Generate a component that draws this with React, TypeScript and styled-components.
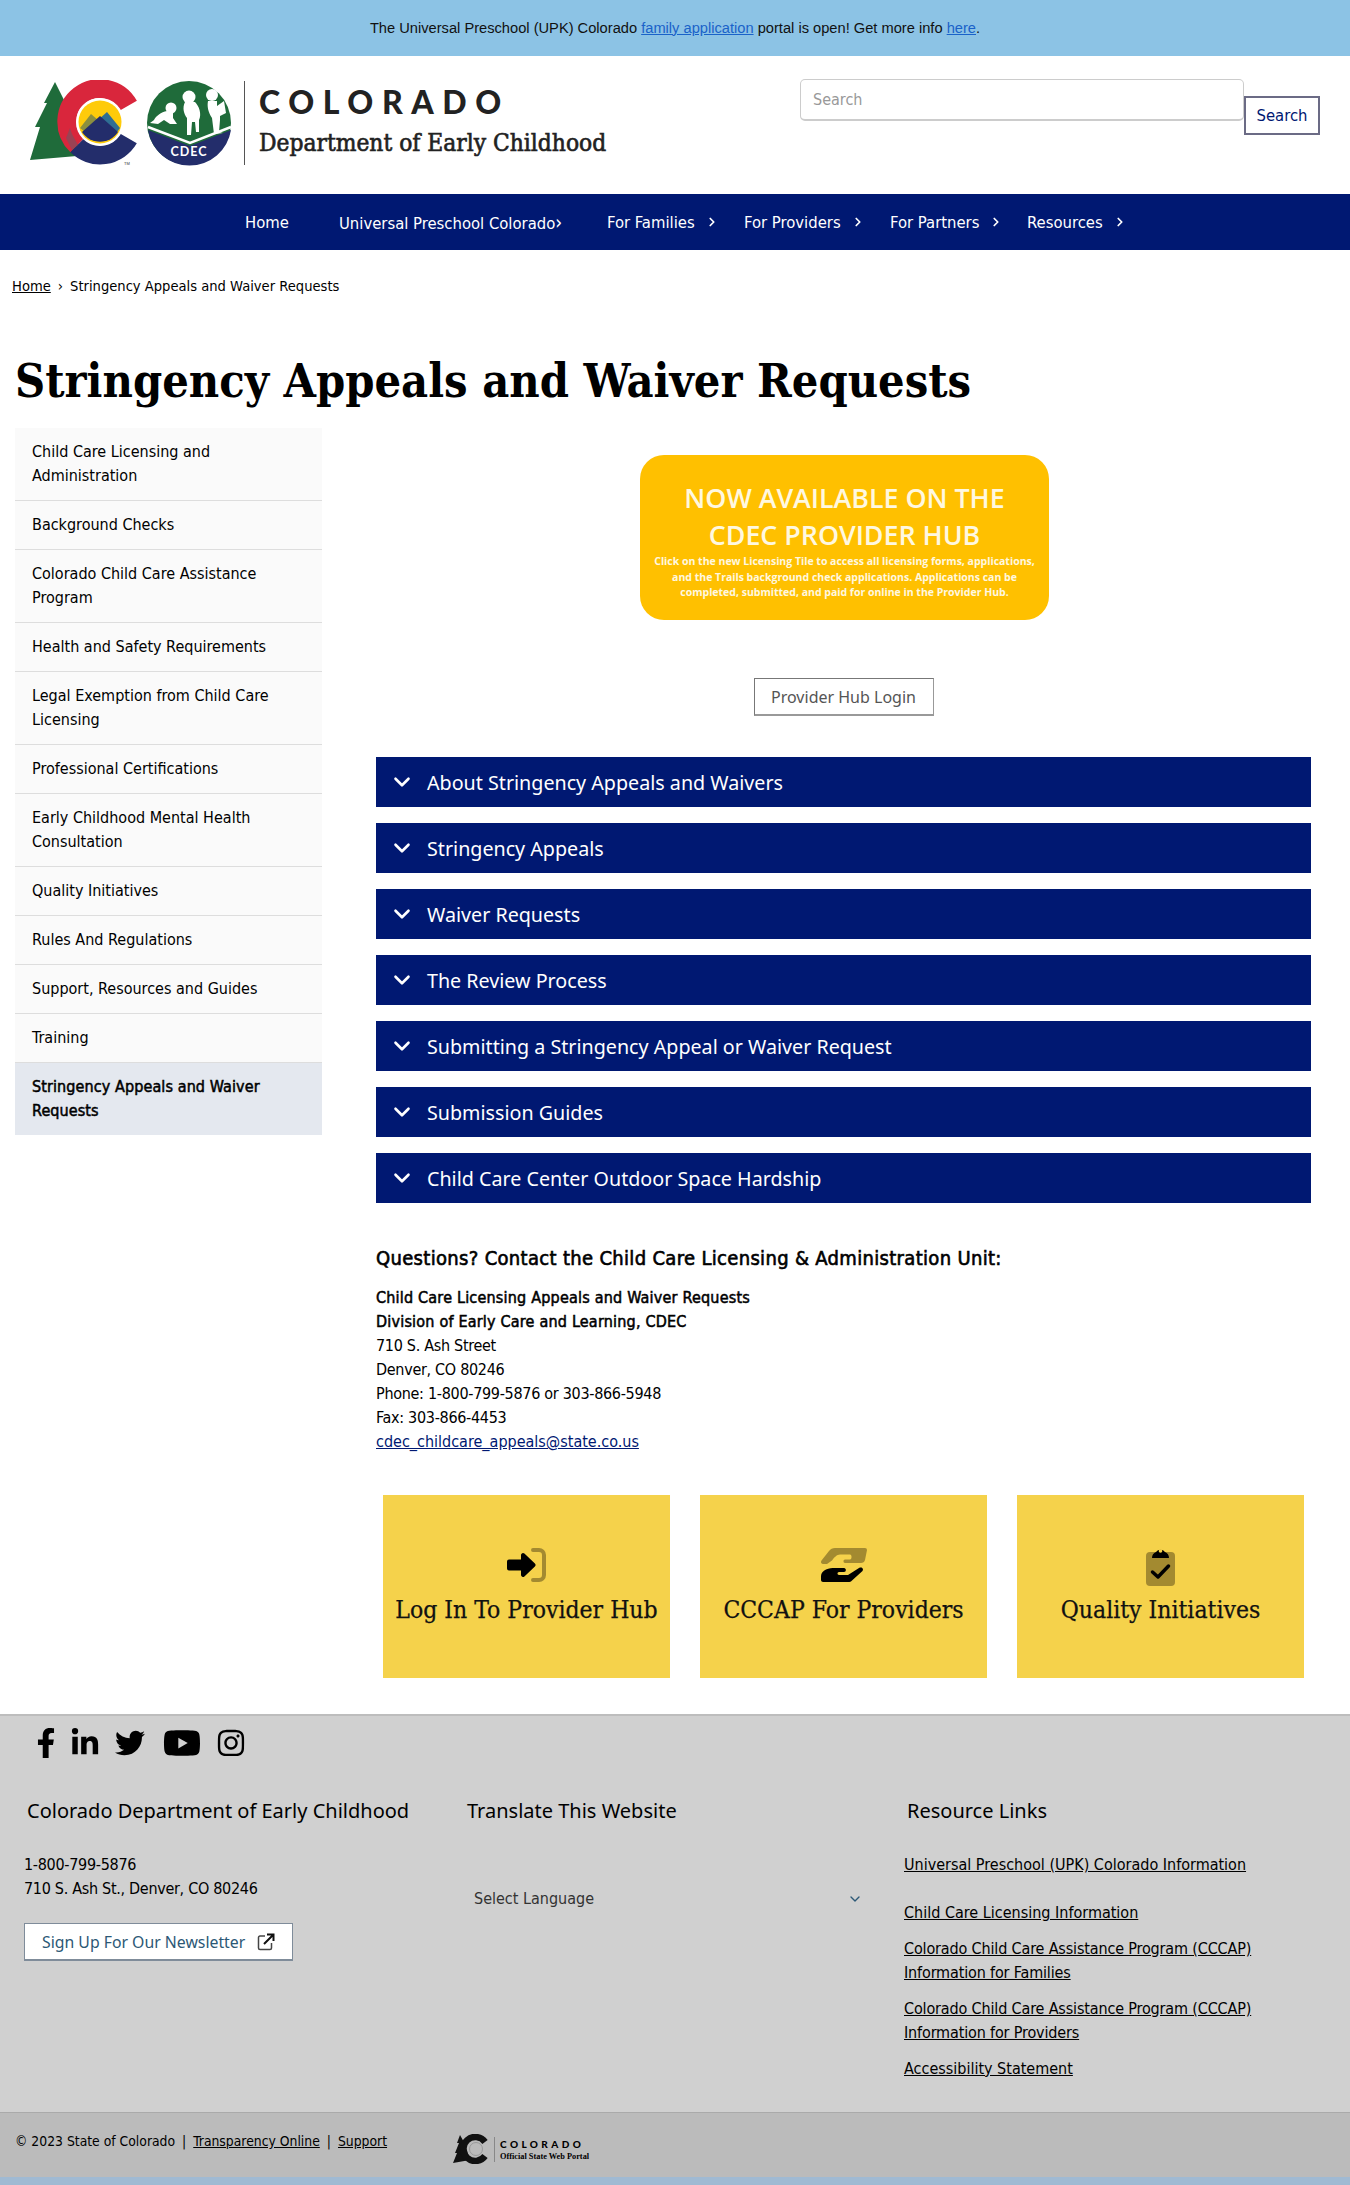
import React from 'react';
import styled, { createGlobalStyle } from 'styled-components';
import { ChevronDown, ChevronRight } from 'lucide-react';
import { FaFacebookF, FaLinkedinIn, FaTwitter, FaYoutube, FaInstagram } from 'react-icons/fa';

const BODY_FONT = `"DejaVu Sans Condensed", "DejaVu Sans", sans-serif`;
const HEAD_FONT = `"Noto Sans", "Open Sans", sans-serif`;
const SLAB_FONT = `"DejaVu Serif Condensed", "DejaVu Serif", serif`;
const NAVY = '#001872';

const GlobalStyle = createGlobalStyle`
  html, body {
    margin: 0;
    padding: 0;
    background: #fff;
    color: #000;
    font-family: ${BODY_FONT};
    font-size: 16px;
  }
  * { box-sizing: border-box; }
`;

const Page = styled.div`
  width: 1350px;
  height: 2185px;
  overflow: hidden;
`;

const AlertBar = styled.div`
  height: 56px;
  background: #8cc3e5;
  display: flex;
  align-items: center;
  justify-content: center;
  font-family: "Liberation Sans", Arial, sans-serif;
  font-size: 14.67px;
  color: #111;
  padding-bottom: 1px;
  a { color: #1a62c9; }
`;

const Header = styled.header`
  height: 138px;
  display: flex;
  justify-content: space-between;
  padding: 23px 30px 0 28px;
`;

const LogoBlock = styled.div`
  display: flex;
  align-items: flex-start;
`;

const LogoMark = styled.svg`
  margin-top: 1px;
`;

const Divider = styled.div`
  width: 1px;
  height: 84px;
  margin: 2px 14px 0 10px;
  background: #555;
`;

const Wordmark = styled.div`
  display: flex;
  flex-direction: column;
  color: #222;
`;

const WordTop = styled.span`
  font-family: "Lato", sans-serif;
  font-weight: 900;
  font-size: 32px;
  letter-spacing: 8.6px;
  line-height: 38px;
  margin-top: 4px;
`;

const WordBottom = styled.span`
  font-family: ${SLAB_FONT};
  font-size: 24.3px;
  line-height: 30px;
  margin-top: 7px;
  -webkit-text-stroke: 0.6px #222;
`;

const SearchBar = styled.div`
  display: flex;
  align-items: flex-start;
`;

const SearchInput = styled.input`
  width: 444px;
  height: 42px;
  border: 1px solid #ccc;
  border-bottom-width: 2px;
  border-radius: 5px;
  padding: 0 12px;
  font-family: ${BODY_FONT};
  font-size: 16px;
  &::placeholder { color: #999; }
`;

const SearchButton = styled.button`
  width: 76px;
  height: 39px;
  margin-top: 17px;
  background: #fff;
  border: 2px solid #6b6b85;
  color: ${NAVY};
  font-family: ${BODY_FONT};
  font-size: 16.5px;
  padding: 0;
`;

const NavBar = styled.nav`
  height: 56px;
  background: ${NAVY};
  display: flex;
  align-items: center;
  padding-left: 245px;
  color: #fff;
  font-size: 16.5px;
  b { font-size: 19px; font-weight: 400; }
`;

const NavItem = styled.a<{ $w: number }>`
  width: ${p => p.$w}px;
  display: flex;
  align-items: center;
  gap: 10px;
  white-space: nowrap;
`;

const Breadcrumb = styled.div`
  padding: 26px 0 0 12px;
  font-size: 14.6px;
  line-height: 20px;
  a { color: #000; text-decoration: underline; }
  span { margin: 0 7px; }
`;

const Title = styled.h1`
  margin: 54px 0 0 15px;
  font-family: ${SLAB_FONT};
  font-size: 46.5px;
  line-height: 62px;
  font-weight: 700;
`;

const Columns = styled.div`
  display: grid;
  grid-template-columns: 307px 935px;
  column-gap: 54px;
  padding: 16px 0 0 15px;
`;

const SideList = styled.ul`
  list-style: none;
  margin: 0;
  padding: 0;
  align-self: start;
`;

const SideItem = styled.li<{ $active?: boolean }>`
  padding: 12px 30px 12px 17px;
  line-height: 24px;
  background: ${p => (p.$active ? '#e4e8ef' : '#fafafa')};
  border-bottom: ${p => (p.$active ? '0' : '1px solid #ddd')};
  letter-spacing: ${p => (p.$active ? '0.1px' : 'normal')};
  -webkit-text-stroke: ${p => (p.$active ? '0.5px #000' : '0')};
`;

const Content = styled.main`
  display: flex;
  flex-direction: column;
`;

const Promo = styled.div`
  align-self: center;
  width: 409px;
  height: 165px;
  margin: 27px 0 0 2px;
  border-radius: 24px;
  background: #ffc000;
  color: #fff8e0;
  text-align: center;
  font-family: "Open Sans", sans-serif;
  font-weight: 700;
  padding-top: 24px;
`;

const PromoTitle = styled.div`
  font-size: 26.8px;
  font-weight: 600;
  line-height: 37px;
`;

const PromoText = styled.div`
  font-size: 10.5px;
  line-height: 15.5px;
  margin-top: 1px;
`;

const HubButton = styled.a`
  align-self: center;
  width: 180px;
  height: 38px;
  margin-top: 58px;
  border: 1px solid #777;
  border-bottom-width: 2px;
  border-color: #777 #999 #999 #777;
  color: #555;
  font-family: ${HEAD_FONT};
  font-size: 16px;
  display: flex;
  align-items: center;
  justify-content: center;
`;

const Accordions = styled.div`
  margin-top: 41px;
  display: flex;
  flex-direction: column;
  gap: 16px;
`;

const AccordionRow = styled.div`
  height: 50px;
  background: ${NAVY};
  color: #fff;
  display: flex;
  align-items: center;
  gap: 12px;
  padding-left: 13px;
  font-family: ${HEAD_FONT};
  font-size: 19.7px;
`;

const ContactBlock = styled.div`
  margin-top: 41px;
  line-height: 24px;
`;

const ContactHeading = styled.h3`
  margin: 0 0 14px;
  font-size: 20px;
  font-weight: 400;
  line-height: 28px;
  letter-spacing: 0.32px;
  -webkit-text-stroke: 0.6px #000;
`;

const ContactLine = styled.div<{ $bold?: boolean; $tight?: boolean }>`
  -webkit-text-stroke: ${p => (p.$bold ? '0.5px #000' : '0')};
  letter-spacing: ${p => (p.$tight ? '-0.3px' : p.$bold ? '0.2px' : 'normal')};
  a { color: ${NAVY}; text-decoration: underline; }
`;

const Tiles = styled.div`
  margin-top: 41px;
  padding-left: 7px;
  display: grid;
  grid-template-columns: repeat(3, 287px);
  column-gap: 30px;
`;

const Tile = styled.a`
  height: 183px;
  background: #f5d24b;
  display: flex;
  flex-direction: column;
  align-items: center;
  padding-top: 49px;
  font-family: ${SLAB_FONT};
  font-size: 24.5px;
  color: #111;
  -webkit-text-stroke: 0.25px #111;
`;

const TileIcon = styled.div`
  height: 42px;
  display: flex;
  align-items: center;
  justify-content: center;
  margin-bottom: 9px;
`;

const Footer = styled.footer`
  margin-top: 36px;
  height: 398px;
  background: #d0d0d0;
  border-top: 2px solid #bdbdbd;
`;

const SocialRow = styled.div`
  height: 50px;
  display: flex;
  align-items: center;
  gap: 15px;
  padding: 4px 0 0 31px;
  font-size: 30px;
  color: #000;
`;

const FacebookIcon = styled(FaFacebookF)`
  margin-right: -6px;
`;

const YoutubeIcon = styled(FaYoutube)`
  font-size: 38px;
  margin-left: 3px;
`;

const FooterColumns = styled.div`
  display: grid;
  grid-template-columns: 440px 440px 1fr;
  padding: 31px 0 0 24px;
  height: 346px;
`;

const FooterColumn = styled.div`
  display: flex;
  flex-direction: column;
`;

const FooterHeading = styled.h4`
  margin: 0 0 28px 3px;
  font-family: ${HEAD_FONT};
  font-weight: 400;
  font-size: 20px;
  line-height: 28px;
`;

const FooterText = styled.div`
  line-height: 24px;
  letter-spacing: -0.3px;
`;

const NewsletterButton = styled.a`
  margin-top: 22px;
  width: 269px;
  height: 38px;
  background: #fff;
  border: 1px solid #7f8c9a;
  border-bottom-width: 2px;
  color: #2c5876;
  font-family: ${HEAD_FONT};
  font-size: 15.8px;
  display: flex;
  align-items: center;
  justify-content: space-between;
  padding: 0 17px;
`;

const LanguageSelect = styled.div`
  margin: 34px 0 0 10px;
  width: 389px;
  display: flex;
  align-items: center;
  justify-content: space-between;
  color: #333;
  line-height: 24px;
`;

const ResourceLink = styled.a<{ $gap: number; $tight?: boolean }>`
  display: block;
  width: 400px;
  margin-bottom: ${p => p.$gap}px;
  line-height: 24px;
  color: #000;
  text-decoration: underline;
  letter-spacing: ${p => (p.$tight ? '-0.15px' : 'normal')};
`;

const BottomBar = styled.div`
  height: 65px;
  background: #bbb;
  border-top: 1px solid #aaa;
  display: flex;
  align-items: flex-start;
  padding: 18px 0 0 15px;
  font-size: 13.8px;
  line-height: 20px;
  a { color: #000; text-decoration: underline; }
  i { font-style: normal; margin: 0 7px; }
`;

const StateLogo = styled.div`
  margin-left: 66px;
  display: flex;
  align-items: center;
  margin-top: 3px;
`;

const StateWords = styled.div`
  border-left: 1px solid #888;
  margin-left: 5px;
  padding-left: 5px;
  display: flex;
  flex-direction: column;
`;

const StateTop = styled.span`
  font-family: "Lato", sans-serif;
  font-weight: 900;
  font-size: 10px;
  letter-spacing: 3.4px;
  line-height: 14px;
`;

const StateBottom = styled.span`
  font-family: "Liberation Serif", serif;
  font-weight: 700;
  font-size: 8.3px;
  line-height: 11px;
`;

const BlueEdge = styled.div`
  height: 8px;
  background: #a0bad3;
`;

const sideItems = [
  'Child Care Licensing and Administration',
  'Background Checks',
  'Colorado Child Care Assistance Program',
  'Health and Safety Requirements',
  'Legal Exemption from Child Care Licensing',
  'Professional Certifications',
  'Early Childhood Mental Health Consultation',
  'Quality Initiatives',
  'Rules And Regulations',
  'Support, Resources and Guides',
  'Training',
];

const accordions = [
  'About Stringency Appeals and Waivers',
  'Stringency Appeals',
  'Waiver Requests',
  'The Review Process',
  'Submitting a Stringency Appeal or Waiver Request',
  'Submission Guides',
  'Child Care Center Outdoor Space Hardship',
];

// logo: tree + C + mountains, then the CDEC round badge
const HeaderLogo = () => (
  <LogoMark width="206" height="88" viewBox="8 10 206 88">
    <path d="M35 12 L46 34 L44 34 L56 60 L60 84 L57 86 L10 90 L20 57 L15 57 L27 33 L24 33 Z" fill="#1f6b3a" />
    <path d="M108.6 35.5 A33 33 0 1 0 57 75.5" fill="none" stroke="#d9263c" strokeWidth="19" />
    <path d="M57 75.5 A33 33 0 0 0 108.6 68.5" fill="none" stroke="#232d6b" strokeWidth="19" />
    <path d="M46 68 L50 58 L52 64 L58 75 L52 80 Z" fill="#8a4a5a" opacity="0.8" />
    <circle cx="80" cy="52" r="24" fill="#fff" />
    <circle cx="80" cy="52" r="21.5" fill="#fecb0a" />
    <path d="M60 58 L71 44 L78 50 L70 66 Z" fill="#8b8f3f" />
    <path d="M78 50 L87 42 L100 58 L94 66 Z" fill="#2f6e93" />
    <path d="M62 62 L80 46 L98 62 A21.5 21.5 0 0 1 62 62 Z" fill="#232d6b" />
    <text x="104" y="95" fontSize="4" fontFamily="Liberation Sans, sans-serif" fill="#333">TM</text>
    <circle cx="169" cy="53" r="42" fill="#1f6b3a" />
    <path d="M128 60 L170 76 L211 60 A42 42 0 0 1 128 60 Z" fill="#232d6b" />
    <path d="M128 57 L170 73 L211 57" fill="none" stroke="#fff" strokeWidth="2.5" />
    <circle cx="151" cy="38" r="5.5" fill="#fff" />
    <path d="M147 41 C141 42 136 46 134 50 L130 53 L138 54 L144 50 L150 54 L157 54 L153 48 L153 43 Z" fill="#fff" />
    <circle cx="169" cy="27" r="6.5" fill="#fff" />
    <path d="M165 32 C162 38 164 44 167 48 L167 65 L171 65 L172 52 L175 52 L176 62 L179 62 L179 50 C182 44 179 36 175 32 Z" fill="#fff" />
    <circle cx="192" cy="25" r="6" fill="#fff" />
    <path d="M188 31 L197 31 L197 36 L204 31 L206 43 L200 46 L200 50 L199 62 L203 63 L194 64 L192 48 C188 42 187 36 188 31 Z" fill="#fff" />
    <text x="169" y="86" textAnchor="middle" fontSize="12.5" fontWeight="700" fontFamily="Lato, sans-serif" letterSpacing="1" fill="#fff">CDEC</text>
  </LogoMark>
);

const SignInIcon = () => (
  <svg width="40" height="34" viewBox="0 0 40 34">
    <path d="M26 2 h6 a5 5 0 0 1 5 5 v20 a5 5 0 0 1 -5 5 h-6" fill="none" stroke="#a38a30" strokeWidth="4" strokeLinecap="round" />
    <path d="M2 11.5 h12 V7 a2 2 0 0 1 3.4 -1.4 l10.5 10 a2 2 0 0 1 0 2.8 l-10.5 10 A2 2 0 0 1 14 27 v-4.5 H2 a2 2 0 0 1 -2 -2 v-7 a2 2 0 0 1 2 -2 Z" fill="#000" />
  </svg>
);

const HandsIcon = () => (
  <svg width="46" height="34" viewBox="0 0 46 34">
    <path d="M14 0 H44 a2 2 0 0 1 2 2 l-2 10 c-.5 2 -2 3 -4 3 H24 c-2 0 -2 -3.5 0 -3.5 h5 c2 0 2 -5 0 -5 H19 c-3 0 -6 3 -8 6 l-5 3.5 H2 c-2 0 -2.5 -2 -1.5 -3.5 L8 3 c1.5 -2 3.5 -3 6 -3 Z" fill="#a38a30" />
    <path d="M0 28 c0 -3 2 -5 5 -6.5 c3 -1.5 6 -1.5 9 -1.5 h9 c2.5 0 2.5 4 0 4 h-5 c-2 0 -2 3 0 3 h9 l11 -7 c3 -1.5 5 1 3.5 3 L31 32.5 c-1 1 -2 1.5 -4 1.5 H2 c-1 0 -2 -1 -2 -2 Z" fill="#000" />
  </svg>
);

const ClipboardIcon = () => (
  <svg width="31" height="42" viewBox="0 0 31 42">
    <rect x="1" y="8" width="29" height="34" rx="4" fill="#a38a30" />
    <path d="M7 14 c0 -3 1.5 -5 4 -6 a5.5 5.5 0 0 1 9 0 c2.5 1 4 3 4 6 Z" fill="#000" />
    <circle cx="15.5" cy="7" r="1.8" fill="#f5d24b" />
    <path d="M7.5 28 l5.5 5 l10.5 -11" fill="none" stroke="#000" strokeWidth="3.5" strokeLinecap="round" strokeLinejoin="round" />
  </svg>
);

const ExternalIcon = () => (
  <svg width="18" height="18" viewBox="0 0 18 18">
    <path d="M8 3 H3 a1.5 1.5 0 0 0 -1.5 1.5 V15 A1.5 1.5 0 0 0 3 16.5 H13 a1.5 1.5 0 0 0 1.5 -1.5 V10" fill="none" stroke="#444" strokeWidth="1.5" />
    <path d="M7 11 L16 2 M10 1.5 h6.5 V8" fill="none" stroke="#111" strokeWidth="2" />
  </svg>
);

const StateMark = () => (
  <svg width="36" height="30" viewBox="0 0 36 30">
    <path d="M7 1 L12 10 L17 26 L0 29 L4 19 L2 19 L6 9 L4 9 Z" fill="#111" />
    <path d="M32 8 A12 12 0 1 0 32 22" fill="none" stroke="#111" strokeWidth="6.5" />
    <circle cx="23" cy="15" r="6.5" fill="none" stroke="#999" strokeWidth="1" />
  </svg>
);

const App: React.FC = () => {
  return (
    <Page>
      <GlobalStyle />
      <AlertBar>
        <span>
          The Universal Preschool (UPK) Colorado <a href="#">family application</a> portal is open! Get more info <a href="#">here</a>.
        </span>
      </AlertBar>

      <Header>
        <LogoBlock>
          <HeaderLogo />
          <Divider />
          <Wordmark>
            <WordTop>COLORADO</WordTop>
            <WordBottom>Department of Early Childhood</WordBottom>
          </Wordmark>
        </LogoBlock>
        <SearchBar>
          <SearchInput placeholder="Search" />
          <SearchButton>Search</SearchButton>
        </SearchBar>
      </Header>

      <NavBar>
        <NavItem $w={94}>Home</NavItem>
        <NavItem $w={268}><span>Universal Preschool Colorado<b>›</b></span></NavItem>
        <NavItem $w={137}>For Families <ChevronRight size={14} strokeWidth={3} /></NavItem>
        <NavItem $w={146}>For Providers <ChevronRight size={14} strokeWidth={3} /></NavItem>
        <NavItem $w={137}>For Partners <ChevronRight size={14} strokeWidth={3} /></NavItem>
        <NavItem $w={120}>Resources <ChevronRight size={14} strokeWidth={3} /></NavItem>
      </NavBar>

      <Breadcrumb>
        <a href="#">Home</a><span>›</span>Stringency Appeals and Waiver Requests
      </Breadcrumb>

      <Title>Stringency Appeals and Waiver Requests</Title>

      <Columns>
        <SideList>
          {sideItems.map(item => (
            <SideItem key={item}>{item}</SideItem>
          ))}
          <SideItem $active>Stringency Appeals and Waiver Requests</SideItem>
        </SideList>

        <Content>
          <Promo>
            <PromoTitle>NOW AVAILABLE ON THE<br />CDEC PROVIDER HUB</PromoTitle>
            <PromoText>
              Click on the new Licensing Tile to access all licensing forms, applications,<br />
              and the Trails background check applications. Applications can be<br />
              completed, submitted, and paid for online in the Provider Hub.
            </PromoText>
          </Promo>
          <HubButton>Provider Hub Login</HubButton>

          <Accordions>
            {accordions.map(label => (
              <AccordionRow key={label}>
                <ChevronDown size={26} strokeWidth={2.4} />
                {label}
              </AccordionRow>
            ))}
          </Accordions>

          <ContactBlock>
            <ContactHeading>Questions? Contact the Child Care Licensing &amp; Administration Unit:</ContactHeading>
            <ContactLine $bold>Child Care Licensing Appeals and Waiver Requests</ContactLine>
            <ContactLine $bold>Division of Early Care and Learning, CDEC</ContactLine>
            <ContactLine $tight>710 S. Ash Street</ContactLine>
            <ContactLine $tight>Denver, CO 80246</ContactLine>
            <ContactLine $tight>Phone: 1-800-799-5876 or 303-866-5948</ContactLine>
            <ContactLine $tight>Fax: 303-866-4453</ContactLine>
            <ContactLine><a href="#">cdec_childcare_appeals@state.co.us</a></ContactLine>
          </ContactBlock>

          <Tiles>
            <Tile><TileIcon><SignInIcon /></TileIcon>Log In To Provider Hub</Tile>
            <Tile><TileIcon><HandsIcon /></TileIcon>CCCAP For Providers</Tile>
            <Tile><TileIcon><ClipboardIcon /></TileIcon>Quality Initiatives</Tile>
          </Tiles>
        </Content>
      </Columns>

      <Footer>
        <SocialRow>
          <FacebookIcon />
          <FaLinkedinIn />
          <FaTwitter />
          <YoutubeIcon />
          <FaInstagram />
        </SocialRow>
        <FooterColumns>
          <FooterColumn>
            <FooterHeading>Colorado Department of Early Childhood</FooterHeading>
            <FooterText>1-800-799-5876<br />710 S. Ash St., Denver, CO 80246</FooterText>
            <NewsletterButton>Sign Up For Our Newsletter <ExternalIcon /></NewsletterButton>
          </FooterColumn>
          <FooterColumn>
            <FooterHeading>Translate This Website</FooterHeading>
            <LanguageSelect>Select Language <ChevronDown size={16} strokeWidth={2} color="#2c5876" /></LanguageSelect>
          </FooterColumn>
          <FooterColumn>
            <FooterHeading>Resource Links</FooterHeading>
            <ResourceLink $gap={24} href="#">Universal Preschool (UPK) Colorado Information</ResourceLink>
            <ResourceLink $gap={12} href="#">Child Care Licensing Information</ResourceLink>
            <ResourceLink $gap={12} $tight href="#">Colorado Child Care Assistance Program (CCCAP) Information for Families</ResourceLink>
            <ResourceLink $gap={12} $tight href="#">Colorado Child Care Assistance Program (CCCAP) Information for Providers</ResourceLink>
            <ResourceLink $gap={0} href="#">Accessibility Statement</ResourceLink>
          </FooterColumn>
        </FooterColumns>
      </Footer>

      <BottomBar>
        <span>© 2023 State of Colorado<i>|</i><a href="#">Transparency Online</a><i>|</i><a href="#">Support</a></span>
        <StateLogo>
          <StateMark />
          <StateWords>
            <StateTop>COLORADO</StateTop>
            <StateBottom>Official State Web Portal</StateBottom>
          </StateWords>
        </StateLogo>
      </BottomBar>
      <BlueEdge />
    </Page>
  );
};

export default App;
